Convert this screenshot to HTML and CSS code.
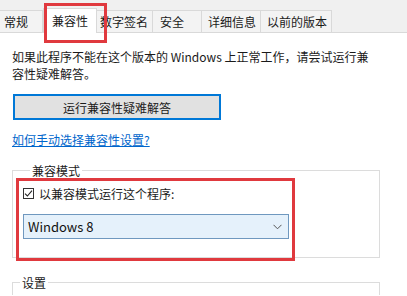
FILE: index.html
```html
<!DOCTYPE html>
<html lang="zh-CN">
<head>
    <meta charset="UTF-8">
    <meta name="viewport" content="width=device-width, initial-scale=1.0">
    <title>属性 - 兼容性</title>
    <link rel="stylesheet" href="styles.css">
</head>
<body>
    <!-- Pestañas del diálogo -->
    <div class="tabs">
        <div class="tab tab-general">常规</div>
        <div class="tab tab-compat active">兼容性</div>
        <div class="tab tab-sign">数字签名</div>
        <div class="tab tab-security">安全</div>
        <div class="tab tab-details">详细信息</div>
        <div class="tab tab-previous">以前的版本</div>
    </div>

    <main class="panel">
        <p class="intro">如果此程序不能在这个版本的 Windows 上正常工作，请尝试运行兼容性疑难解答。</p>

        <button class="btn-troubleshoot">运行兼容性疑难解答</button>

        <a href="#" class="help-link">如何手动选择兼容性设置?</a>

        <!-- Modo de compatibilidad -->
        <fieldset class="group group-mode">
            <legend>兼容模式</legend>
            <label class="check-row">
                <span class="checkbox">
                    <svg width="9" height="9" viewBox="0 0 9 9"><path d="M1 4.6 L3.4 7 L8 1.6" fill="none" stroke="#222" stroke-width="1.1"/></svg>
                </span>
                以兼容模式运行这个程序:
            </label>
            <div class="select">
                <span>Windows 8</span>
                <svg width="9" height="6" viewBox="0 0 9 6"><path d="M0.5 0.8 L4.5 4.8 L8.5 0.8" fill="none" stroke="#555" stroke-width="1"/></svg>
            </div>
        </fieldset>

        <fieldset class="group group-settings">
            <legend>设置</legend>
        </fieldset>
    </main>

    <!-- Marcas rojas sobre la captura -->
    <div class="mark mark-tab"></div>
    <div class="mark mark-mode"></div>
</body>
</html>
```

FILE: styles.css
```css
/* Estilos generales */
* {
    margin: 0;
    padding: 0;
    box-sizing: border-box;
    font-family: "Noto Sans CJK SC", "Noto Sans", sans-serif;
}

html, body {
    height: 296px;
    overflow: hidden;
}

body {
    background-color: #fff;
    color: #1a1a1a;
    font-size: 12px;
    position: relative;
}

/* Pestañas */
.tabs {
    display: flex;
    align-items: flex-end;
    height: 33px;
    background-color: #f0f0f0;
    border-bottom: 1px solid #d9d9d9;
}

.tab {
    height: 22px;
    line-height: 21px;
    border-top: 1px solid #d9d9d9;
    border-right: 1px solid #d9d9d9;
    background-color: #f3f3f3;
    white-space: nowrap;
}

.tab.active {
    height: 25px;
    line-height: 24px;
    background-color: #fff;
    border-left: 1px solid #d9d9d9;
    margin-bottom: -1px;
    position: relative;
}

.tab-general { width: 43px; padding-left: 4px; }
.tab-compat { width: 54px; padding-left: 8px; }
.tab-sign { width: 56px; padding-left: 3px; }
.tab-security { width: 49px; padding-left: 7px; }
.tab-details { width: 59px; padding-left: 6px; }
.tab-previous { width: 71px; padding-left: 6px; }

/* Contenido */
.panel {
    padding: 15px 27px 0 12px;
}

.intro {
    line-height: 17px;
}

.btn-troubleshoot {
    display: block;
    width: 208px;
    height: 26px;
    margin: 12px 0 0 1px;
    background-color: #e1e1e1;
    border: 2px solid #0078d7;
    font-size: 12px;
    color: #1a1a1a;
}

.help-link {
    display: inline-block;
    margin-top: 11px;
    line-height: 17px;
    color: #0066cc;
    text-decoration: underline;
}

.group {
    border: 1px solid #dcdcdc;
    margin-top: 14px;
    padding: 6px 10px 18px 10px;
}

.group legend {
    margin-left: 7px;
    padding: 0 2px;
    line-height: 17px;
}

.check-row {
    display: flex;
    align-items: center;
    gap: 5px;
    height: 17px;
}

.checkbox {
    width: 11px;
    height: 11px;
    border: 1px solid #333;
    display: flex;
    align-items: center;
    justify-content: center;
}

.select {
    display: flex;
    justify-content: space-between;
    align-items: center;
    width: 266px;
    height: 25px;
    margin-top: 12px;
    padding: 0 6px 0 4px;
    background-color: #e5f1fb;
    border: 1px solid #6f98bf;
    font-size: 13px;
    color: #111;
}

/* El grupo "设置" continúa fuera de la ventana */
.group-settings {
    margin-top: 16px;
    height: 21px;
    padding: 0;
    border-bottom: none;
}

/* Marcas rojas */
.mark {
    position: absolute;
    border: 3px solid #e0393e;
}

.mark-tab {
    left: 44px;
    top: 3px;
    width: 63px;
    height: 40px;
}

.mark-mode {
    left: 16px;
    top: 178px;
    width: 279px;
    height: 83px;
}
```
